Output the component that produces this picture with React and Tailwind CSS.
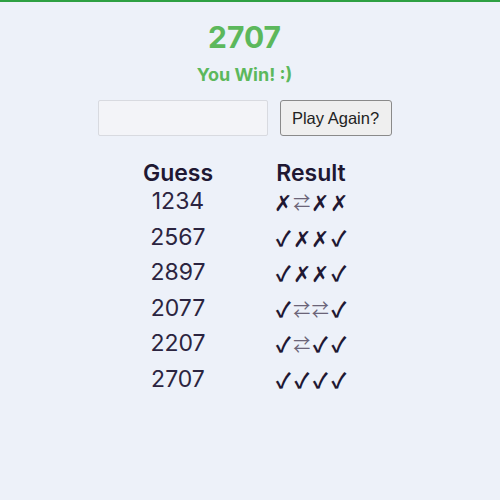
const rows = [
  { guess: "1234", result: "✗⇄✗✗" },
  { guess: "2567", result: "✓✗✗✓" },
  { guess: "2897", result: "✓✗✗✓" },
  { guess: "2077", result: "✓⇄⇄✓" },
  { guess: "2207", result: "✓⇄✓✓" },
  { guess: "2707", result: "✓✓✓✓" },
];

function Mark({ ch }) {
  if (ch === "⇄") {
    return (
      <span className="inline-block w-[18.5px] text-center text-[17px] text-[#6b6478] font-['Noto_Sans_CJK_JP',sans-serif]">
        {ch}
      </span>
    );
  }
  if (ch === "✗") {
    return (
      <span className="inline-block w-[18.5px] text-center text-[22px] font-normal font-['Noto_Sans_CJK_JP',sans-serif]">
        {ch}
      </span>
    );
  }
  return (
    <span className="inline-block w-[18.5px] text-center text-[21px] font-bold font-['Noto_Sans_CJK_JP',sans-serif]">
      {ch}
    </span>
  );
}

export default function App() {
  return (
    <div className="w-[500px] h-[500px] bg-[#edf1f9] border-t-2 border-[#2ea043] font-['Inter',sans-serif]">
      <div className="w-[489px] flex flex-col items-center">
        <h1 className="mt-[15px] text-[30px] leading-[40px] font-bold text-[#5cb85c]">2707</h1>
        <p className="mt-[7px] text-[18px] leading-[22px] font-bold text-[#5cb85c]">You Win! :)</p>

        <div className="mt-[14px] flex items-center gap-[12px]">
          <input
            type="text"
            className="w-[170px] h-[36px] bg-[#f3f4f8] border border-[#d8dae0] rounded-[2px] outline-none"
          />
          <button className="h-[36px] w-[112px] bg-[#efefef] border border-[#8a8a8a] rounded-[3px] text-[16.5px] text-[#222] font-['Liberation_Sans',Arial,sans-serif]">
            Play Again?
          </button>
        </div>

        <div className="mt-[26px] flex justify-center text-[#1f1833]">
          <div className="w-[133px] flex flex-col items-center">
            <div className="text-[23px] leading-[22px] font-semibold">Guess</div>
            {rows.map((r, i) => (
              <div key={i} className="text-[23px] leading-[35.6px] text-[#2b2440]">{r.guess}</div>
            ))}
          </div>
          <div className="w-[133px] flex flex-col items-center">
            <div className="text-[23px] leading-[22px] font-semibold">Result</div>
            {rows.map((r, i) => (
              <div key={i} className="h-[35.6px] flex items-center">
                {[...r.result].map((ch, j) => (
                  <Mark key={j} ch={ch} />
                ))}
              </div>
            ))}
          </div>
        </div>
      </div>
    </div>
  );
}
